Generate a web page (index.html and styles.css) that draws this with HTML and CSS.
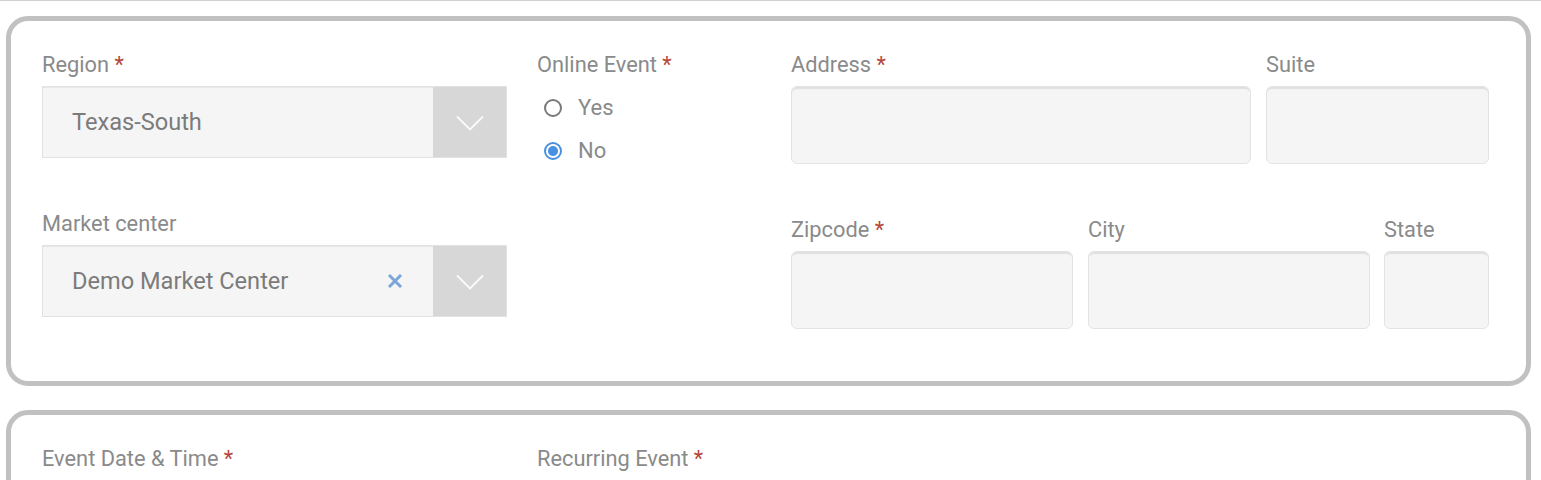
FILE: index.html
```html
<!DOCTYPE html>
<html>
<head>
<meta charset="utf-8">
<link rel="stylesheet" href="styles.css">
</head>
<body>
<div class="topline"></div>
<section class="card">
  <div class="grid">
    <div class="col">
      <div class="field">
        <div class="label">Region <span class="req">*</span></div>
        <div class="select">
          <div class="value">Texas-South</div>
          <div class="arrow"><svg width="28" height="16" viewBox="0 0 28 16"><path d="M1 1.5 L14 14.5 L27 1.5" fill="none" stroke="#fafafa" stroke-width="1.8"/></svg></div>
        </div>
      </div>
      <div class="field">
        <div class="label">Market center</div>
        <div class="select">
          <div class="value">Demo Market Center</div>
          <div class="clear"><svg width="14" height="14" viewBox="0 0 14 14"><path d="M2 2 L12 12 M12 2 L2 12" stroke="#7ba6d8" stroke-width="3" stroke-linecap="square"/></svg></div>
          <div class="arrow"><svg width="28" height="16" viewBox="0 0 28 16"><path d="M1 1.5 L14 14.5 L27 1.5" fill="none" stroke="#fafafa" stroke-width="1.8"/></svg></div>
        </div>
      </div>
    </div>
    <div class="col">
      <div class="label">Online Event <span class="req">*</span></div>
      <div class="radio"><span class="circle"></span><span>Yes</span></div>
      <div class="radio"><span class="circle checked"></span><span>No</span></div>
    </div>
    <div class="col">
      <div class="row row-a">
        <div class="field"><div class="label">Address <span class="req">*</span></div><div class="input"></div></div>
        <div class="field"><div class="label">Suite</div><div class="input"></div></div>
      </div>
      <div class="row row-b">
        <div class="field"><div class="label">Zipcode <span class="req">*</span></div><div class="input"></div></div>
        <div class="field"><div class="label">City</div><div class="input"></div></div>
        <div class="field"><div class="label">State</div><div class="input"></div></div>
      </div>
    </div>
  </div>
</section>
<section class="card card2">
  <div class="grid">
    <div class="col"><div class="label">Event Date &amp; Time <span class="req">*</span></div></div>
    <div class="col"><div class="label">Recurring Event <span class="req">*</span></div></div>
    <div class="col"></div>
  </div>
</section>
</body>
</html>
```

FILE: styles.css
```css
html, body {
  margin: 0;
  padding: 0;
  background: #fff;
  font-family: Roboto, "Liberation Sans", sans-serif;
  color: #888;
}
.topline {
  height: 1px;
  background: #cfcfcf;
}
.card {
  margin: 15px 10px 0 6px;
  border: 5px solid #c1c1c1;
  border-radius: 22px;
  padding: 31px 37px 52px 31px;
}
.card2 {
  margin-top: 24px;
  height: 200px;
}
.grid {
  display: grid;
  grid-template-columns: 465px 224px 698px;
  column-gap: 30px;
}
.label {
  font-size: 21.8px;
  line-height: 26px;
  color: #8a8a8a;
  margin-bottom: 8px;
  white-space: nowrap;
}
.req {
  color: #b5463b;
}
.field + .field {
  margin-top: 53px;
}
.row .field + .field {
  margin-top: 0;
}
.select {
  height: 70px;
  border: 1px solid #e2e2e2;
  box-shadow: inset 0 2px 1px -1px #e6e6e6;
  background: #f5f5f5;
  display: flex;
  align-items: stretch;
}
.value {
  flex: 1;
  display: flex;
  align-items: center;
  padding-left: 29px;
  font-size: 23.6px;
  color: #7b7b7b;
}
.clear {
  display: flex;
  align-items: center;
  padding-right: 31px;
}
.arrow {
  width: 73px;
  background: #d7d7d7;
  display: flex;
  align-items: center;
  justify-content: center;
  padding-top: 1px;
}
.radio {
  height: 43px;
  display: flex;
  align-items: center;
  gap: 16px;
  font-size: 22px;
  color: #8a8a8a;
  padding-left: 7px;
}
.circle {
  width: 14px;
  height: 14px;
  border: 2px solid #7a7a7a;
  border-radius: 50%;
  box-sizing: content-box;
  background: #fff;
  flex: none;
}
.circle.checked {
  border-color: #4a90e2;
  background: radial-gradient(circle, #4a90e2 0 4.5px, #fff 5.5px);
}
.row {
  display: grid;
  column-gap: 15px;
}
.row-a {
  grid-template-columns: 460px 223px;
}
.row-b {
  margin-top: 53px;
  grid-template-columns: 282px 282px 105px;
  column-gap: 15px;
}
.row-b .field:last-child {
  margin-left: -1px;
  margin-right: 1px;
}
.input {
  height: 76px;
  border: 1px solid #e3e3e3;
  border-radius: 6px;
  background: #f5f5f5;
  box-shadow: inset 0 3px 1px -1px #e0e0e0;
}
```
